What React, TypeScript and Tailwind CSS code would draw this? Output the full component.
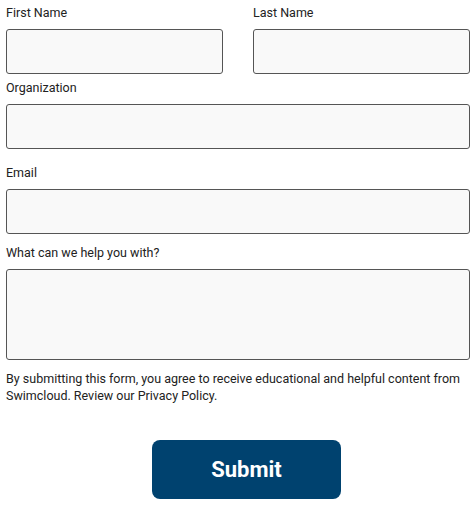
import React from "react";

function Field({ label, className = "" }: { label: string; className?: string }) {
  return (
    <div className={className}>
      <label className="block text-[12.5px] leading-[20px] text-[#222] mb-[6px]">{label}</label>
      <input
        type="text"
        className="block w-full h-[45px] rounded-[3px] border border-[#555] bg-[#f9f9f9] outline-none"
      />
    </div>
  );
}

export default function App() {
  return (
    <div className="px-[6px] pt-[3px] bg-white min-h-screen" style={{ fontFamily: "Roboto, 'Liberation Sans', sans-serif" }}>
      {/* Name row */}
      <div className="grid grid-cols-2 gap-[30px]">
        <Field label="First Name" />
        <Field label="Last Name" />
      </div>

      <Field label="Organization" className="mt-[4px]" />
      <Field label="Email" className="mt-[14px]" />

      {/* Message */}
      <div className="mt-[9px]">
        <label className="block text-[12.5px] leading-[20px] text-[#222] mb-[6px]">What can we help you with?</label>
        <textarea className="block w-full h-[91px] rounded-[3px] border border-[#555] bg-[#f9f9f9] outline-none resize-none" />
      </div>

      <p className="mt-[10px] text-[12.5px] leading-[17px] text-[#222]">
        By submitting this form, you agree to receive educational and helpful content from Swimcloud. Review our Privacy Policy.
      </p>

      {/* Button */}
      <button className="mt-[36px] ml-[146px] w-[189px] h-[59px] rounded-[8px] bg-[#00426f] text-white text-[22px] font-bold">
        Submit
      </button>
    </div>
  );
}
